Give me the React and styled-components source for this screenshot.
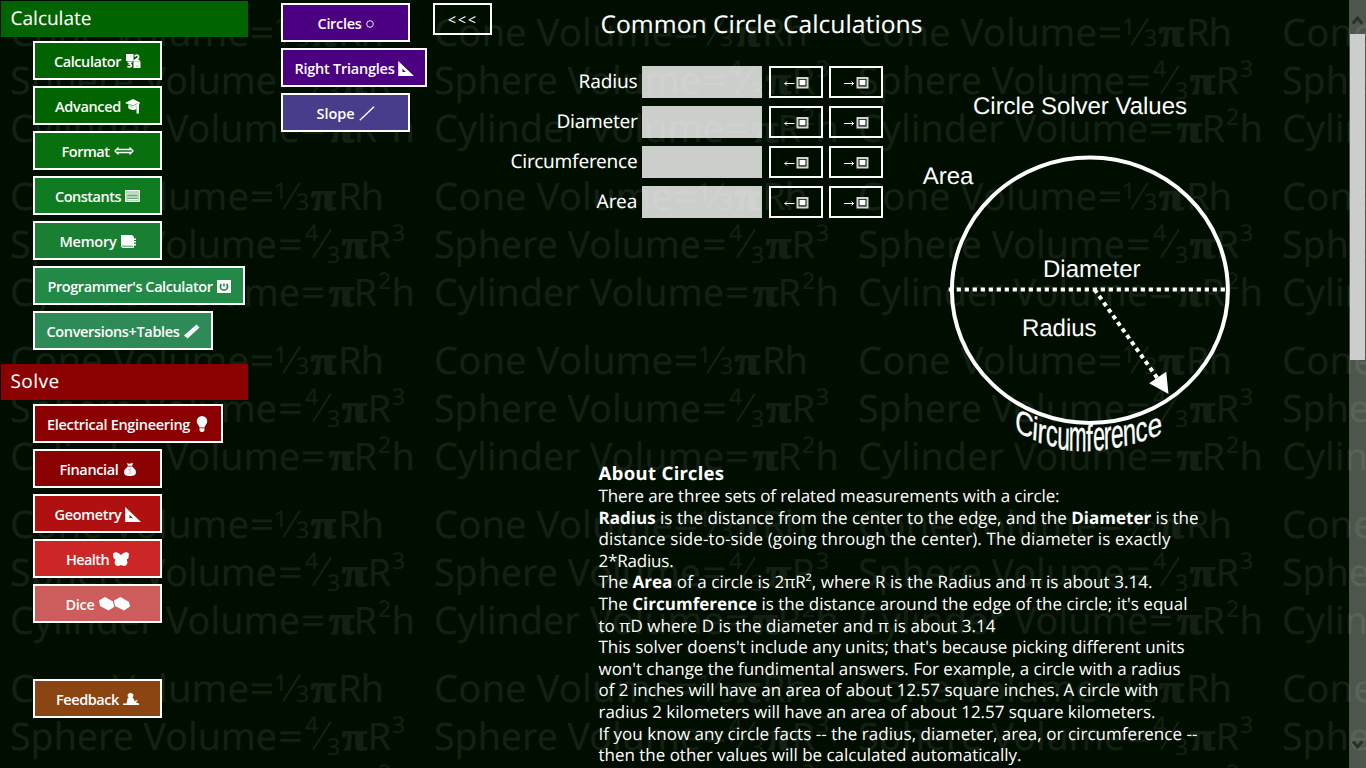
import React, { useLayoutEffect, useRef, useState } from "react";
import styled, { createGlobalStyle } from "styled-components";

const GlobalStyle = createGlobalStyle`
  body {
    margin: 0;
    background: #000e00;
    overflow: hidden;
  }
  * { box-sizing: border-box; }
`;

const sans = `"Open Sans", "Noto Sans", sans-serif`;
const display = `"Noto Sans", "Open Sans", sans-serif`;

const Page = styled.div`
  position: relative;
  display: flex;
  width: 1366px;
  height: 768px;
  overflow: hidden;
  background: #000e00;
  color: #fff;
  font-family: ${sans};
  text-rendering: geometricPrecision;
`;

/* ---------- text set to a given measure ---------- */

const Measured = styled.span`
  display: inline-block;
  white-space: pre;
`;

function Fit({ width, children }) {
  const ref = useRef(null);
  const [spacing, setSpacing] = useState(0);
  useLayoutEffect(() => {
    const el = ref.current;
    const natural = el.getBoundingClientRect().width;
    setSpacing((width - natural) / el.textContent.length);
  }, [width]);
  return (
    <Measured ref={ref} style={{ letterSpacing: `${spacing}px` }}>
      {children}
    </Measured>
  );
}

/* ---------- formula backdrop ---------- */

const Backdrop = styled.div`
  position: absolute;
  inset: 0;
  width: 1696px;
  display: grid;
  grid-template-columns: repeat(4, 424px);
  grid-auto-rows: 164px;
  pointer-events: none;
`;

const Tile = styled.svg`
  display: block;
  width: 424px;
  height: 164px;
  fill: #fff;
  opacity: 0.075;
  font-family: ${display};
  font-size: 38px;
`;

const Pi = styled.text`
  font-family: "Liberation Serif", serif;
  font-weight: 700;
  font-size: 40px;
  stroke: #fff;
  stroke-width: 1.2px;
`;

const Small = styled.text`
  font-size: 23px;
`;

function FormulaTile() {
  return (
    <Tile viewBox="0 0 424 164" aria-hidden="true">
      <text x="10" y="45.5" textLength="239" lengthAdjust="spacingAndGlyphs">Cone Volume</text>
      <text x="249.500" y="45.5" textLength="25" lengthAdjust="spacingAndGlyphs">=</text>
      <Small x="274" y="34.500">1</Small>
      <path d="M283 45.5L300 18.5" stroke="#fff" strokeWidth="2.2" />
      <Small x="296" y="45.500">3</Small>
      <Pi x="311" y="45.5" textLength="25" lengthAdjust="spacingAndGlyphs">π</Pi>
      <text x="338" y="45.5" textLength="46">Rh</text>

      <text x="10" y="93.5" textLength="267" lengthAdjust="spacingAndGlyphs">Sphere Volume</text>
      <text x="278" y="93.5" textLength="25" lengthAdjust="spacingAndGlyphs">=</text>
      <Small x="305" y="76.500">4</Small>
      <path d="M313 93.5L331 65.5" stroke="#fff" strokeWidth="2.2" />
      <Small x="327" y="98.500">3</Small>
      <Pi x="342" y="93.5" textLength="25" lengthAdjust="spacingAndGlyphs">π</Pi>
      <text x="367.500" y="93.5">R</text>
      <Small x="392" y="76.500">3</Small>

      <text x="10" y="141.5" textLength="290" lengthAdjust="spacingAndGlyphs">Cylinder Volume</text>
      <text x="300.500" y="141.5" textLength="25" lengthAdjust="spacingAndGlyphs">=</text>
      <Pi x="329" y="141.5" textLength="25" lengthAdjust="spacingAndGlyphs">π</Pi>
      <text x="353.500" y="141.5">R</text>
      <Small x="378" y="125">2</Small>
      <text x="391.500" y="141.5">h</text>
    </Tile>
  );
}

/* ---------- navigation ---------- */

const Sidebar = styled.nav`
  position: relative;
  width: 281px;
  padding: 1px 0 0 1px;
`;

const SectionTitle = styled.h2`
  display: flex;
  align-items: center;
  width: 247px;
  height: 36px;
  margin: 0 0 4px;
  padding: 0 0 3px 9.5px;
  background: ${(p) => p.$color};
  font-family: ${display};
  font-size: 19px;
  font-weight: 400;
`;

const ButtonList = styled.div`
  display: flex;
  flex-direction: column;
  align-items: flex-start;
  gap: 6px;
  padding-left: 32px;
  margin-bottom: ${(p) => p.$after || 0}px;
`;

const NavButton = styled.button`
  display: flex;
  align-items: center;
  justify-content: center;
  gap: ${(p) => p.$gap || 5}px;
  width: ${(p) => p.$width || 129}px;
  height: 39px;
  padding: 1px 0 0;
  border: 2px solid #fff;
  background: ${(p) => p.$color};
  color: #fff;
  font-family: ${sans};
  font-size: 14.5px;
  font-weight: 600;
  line-height: 35px;
`;

const Glyph = styled.svg`
  flex: none;
  display: block;
  fill: currentColor;
`;

const icons = {
  calculator: (
    <Glyph width="15" height="14" viewBox="0 0 15 14">
      <path d="M0 0H7.500V7H0zM7.500 7.200H14.500V14H7.500z" />
      <path d="M8.500 2.500Q10 .5 12 1.500Q13.500 3 11.500 4.500L9 6.200H13.500M1.500 8.300H5.200L3.400 10Q5.800 10.400 5.300 12Q4 13.500 1.300 12.600" fill="none" stroke="currentColor" strokeWidth="1.600" />
      <path d="M3.800 2h.8M9.800 12h2.600" stroke="#93bd97" strokeWidth=".8" />
    </Glyph>
  ),
  cap: (
    <Glyph width="15" height="15" viewBox="0 0 15 15">
      <path d="M0 4L8 0L15 3.500L14 6V14.500H11.500V7L8 8.500L3.500 6.500V5.200Z" />
      <path d="M3 6.500L7.500 8.500L11.500 7V10Q7.500 12 3.500 9.500Z" />
      <path d="M4 5.200L8 6.800L12.500 4.500" fill="none" stroke="#3f8c43" strokeWidth=".7" />
    </Glyph>
  ),
  format: (
    <Glyph width="20" height="8" viewBox="0 0 20 8">
      <path d="M3 2.500H17M3 5.500H17M4.500 .5L1 4L4.500 7.500M15.500 .5L19 4L15.500 7.500" fill="none" stroke="currentColor" strokeWidth="1.300" />
    </Glyph>
  ),
  table: (
    <Glyph width="15" height="12" viewBox="0 0 15 12">
      <path d="M.5 .5H14.500V11.500H.5Z" fill="#b9dabd" stroke="#fff" />
      <path d="M3 7H12.500M3 9.500H12.500" stroke="#fff" strokeWidth="1.200" />
      <path d="M2.500 5.800H12.500M2.500 8.200H12.500" stroke="#0f7c22" strokeWidth=".7" />
    </Glyph>
  ),
  memory: (
    <Glyph width="15" height="13" viewBox="0 0 15 13">
      <path d="M0 0H11L13 2V3.500H15V5H13V6H15V7.500H13V8.800H15V10.500H13V13H1.500L0 11.500Z" />
      <path d="M1 11.200H10.500L12.300 12.200" fill="none" stroke="#198033" strokeWidth=".8" />
    </Glyph>
  ),
  power: (
    <Glyph width="14" height="13" viewBox="0 0 14 13">
      <path d="M0 0H14V13H0Z" />
      <path d="M4.200 4Q2.500 7 4.300 9Q7 11.200 9.700 9Q11.500 6.500 9.700 3.800M7 3.500V6.500" fill="none" stroke="#238946" strokeWidth="1.600" />
    </Glyph>
  ),
  ruler: (
    <Glyph width="16" height="15" viewBox="0 0 16 15">
      <path d="M0 11.500L12.500 .5L15.500 3.500L3.500 14.500Z" />
      <path d="M3 10.500l.8.9M5.500 8.300l.8.9M8 6.100l.8.9M10.500 3.900l.8.9" stroke="#9dc9ae" strokeWidth=".7" />
    </Glyph>
  ),
  bulb: (
    <Glyph width="13" height="16" viewBox="0 0 13 16">
      <path d="M6 0A5.300 5.300 0 0 1 11.300 5.200C11.300 8 8.800 9 8.500 11.500H3.500C3.200 9 .7 8 .7 5.200A5.300 5.300 0 0 1 6 0ZM3.500 12.300H8.500V14.500L7 16H5L3.500 14.500Z" />
    </Glyph>
  ),
  money: (
    <Glyph width="12" height="13" viewBox="0 0 12 13">
      <path d="M3 0L5 .8L9 0L8.200 2.800H3.800ZM3.600 3.500H8.400Q12 6.500 12 9.500Q12 13 6 13Q0 13 0 9.500Q0 6.500 3.600 3.500Z" />
      <path d="M7.500 6.300Q4.700 5.800 4.800 7.200Q7.500 8.500 7.300 9.500Q6.500 10.900 4.500 10.200" fill="none" stroke="#c99" strokeWidth=".8" />
    </Glyph>
  ),
  triangle: (
    <Glyph width="16" height="15" viewBox="0 0 16 15">
      <path fillRule="evenodd" d="M.2 0L16 15H.2ZM4.500 7.800V11H7.800Z" />
    </Glyph>
  ),
  health: (
    <Glyph width="16" height="14" viewBox="0 0 16 14">
      <path d="M0 1.500L2.500 0L5.500 1L8 3L10.500 1L13.500 0L16 1.500L15.500 6L13.800 7.500L14.500 11L13 13.500L10.500 14L8 13L5.500 14L3 13.500L1.500 11L2.200 7.500L.5 6Z" />
    </Glyph>
  ),
  dice: (
    <Glyph width="31" height="14" viewBox="0 0 31 14">
      <path d="M0 3.500L6 0L14 4.500L15 9L15.500 9.800L9.500 13.500L1 9ZM15 3.500L21.500 0L30 5L31 9.500L25 13.500L16 9Z" />
    </Glyph>
  ),
  person: (
    <Glyph width="16" height="12" viewBox="0 0 16 12">
      <path d="M7.500 0A2.800 2.400 0 0 1 7.500 5A2.800 2.400 0 0 1 7.500 0ZM4.500 5.500Q7.500 3.500 10.500 5.300L11.500 8L15 6.800L13 9.500L16 10.500V12H0V10.500H3.500Z" />
    </Glyph>
  ),
  circle: (
    <Glyph width="8" height="10" viewBox="0 0 8 10">
      <circle cx="4" cy="6" r="3.300" fill="none" stroke="currentColor" strokeWidth=".9" />
    </Glyph>
  ),
  slope: (
    <Glyph width="16" height="15" viewBox="0 0 16 15">
      <path d="M.8 14.200L15 .8" stroke="currentColor" strokeWidth="1.400" />
    </Glyph>
  ),
};

const calculateItems = [
  { label: "Calculator", text: 67, icon: "calculator", color: "#006400" },
  { label: "Advanced", text: 66, icon: "cap", color: "#006400", gap: 4 },
  { label: "Format", text: 48, icon: "format", color: "#09700f", gap: 4 },
  { label: "Constants", text: 66, icon: "table", color: "#0f7c22", gap: 4 },
  { label: "Memory", text: 57, icon: "memory", color: "#198033", gap: 4 },
  { label: "Programmer's Calculator", text: 165, icon: "power", color: "#238946", width: 212, gap: 4 },
  { label: "Conversions+Tables", text: 133, icon: "ruler", color: "#2e8b57", width: 180, gap: 4 },
];

const solveItems = [
  { label: "Electrical Engineering", text: 143, icon: "bulb", color: "#8b0000", width: 190, gap: 6 },
  { label: "Financial", text: 59, icon: "money", color: "#8b0000" },
  { label: "Geometry", text: 67, icon: "triangle", color: "#b01010", gap: 3 },
  { label: "Health", text: 43, icon: "health", color: "#cd2626", gap: 4 },
  { label: "Dice", text: 29, icon: "dice", color: "#cd5c5c", gap: 4 },
];

const shapeItems = [
  { label: "Circles", text: 44, icon: "circle", color: "#4b0082", gap: 4 },
  { label: "Right Triangles", text: 100, icon: "triangle", color: "#4b0082", width: 146, gap: 3 },
  { label: "Slope", text: 38, icon: "slope", color: "#483d8b", gap: 4 },
];

function NavItems({ items }) {
  return items.map((item) => (
    <NavButton key={item.label} $color={item.color} $width={item.width} $gap={item.gap}>
      <Fit width={item.text}>{item.label}</Fit>
      {icons[item.icon]}
    </NavButton>
  ));
}

const Submenu = styled.nav`
  position: relative;
  display: flex;
  flex-direction: column;
  align-items: flex-start;
  gap: 6px;
  width: 152px;
  padding-top: 3px;
`;

/* ---------- solver ---------- */

const Main = styled.main`
  position: relative;
  width: 916px;
`;

const Header = styled.header`
  display: flex;
  align-items: flex-start;
  height: 66px;
  padding-top: 3px;
`;

const CollapseButton = styled.button`
  display: flex;
  align-items: center;
  justify-content: center;
  width: 59px;
  height: 32px;
  padding: 2px 0 0 1px;
  border: 2px solid #fff;
  background: transparent;
  color: #fff;
  font-family: ${sans};
  font-size: 14px;
  line-height: 26px;
`;

const Title = styled.h1`
  margin: 6px 0 0 108.5px;
  font-family: ${display};
  font-size: 24.5px;
  font-weight: 400;
  line-height: 32px;
`;

const Workspace = styled.div`
  display: flex;
  height: 394px;
`;

const Form = styled.div`
  display: flex;
  flex-direction: column;
  gap: 8px;
  width: 450px;
`;

const Field = styled.div`
  display: flex;
  align-items: center;
  height: 32px;
`;

const Label = styled.label`
  width: 204.5px;
  padding-bottom: 2px;
  margin-right: 4.5px;
  text-align: right;
  font-family: ${display};
  font-size: 19px;
  line-height: 28px;
`;

const Input = styled.input`
  width: 120px;
  height: 32px;
  margin-right: 7px;
  padding: 0;
  border: 0;
  background: rgba(255, 255, 255, 0.8);
`;

const ClipButton = styled.button`
  display: flex;
  justify-content: center;
  width: 54px;
  height: 32px;
  margin-right: 6px;
  padding: 9px 0 0;
  border: 2px solid #fff;
  background: transparent;
  color: #fff;
  &:last-child { margin-right: 0; }
`;

function ClipIcon({ out }) {
  return (
    <Glyph width="26" height="12" viewBox="0 0 26 12">
      <path
        d={out ? "M1 6.500H11M8.500 4.500L10.500 6.500L8.500 8.500" : "M1.500 6.500H11.500M4 4.500L2 6.500L4 8.500"}
        fill="none"
        stroke="currentColor"
        strokeWidth="1"
      />
      <path d="M14.500 1H24.500V10.500H14.500Z" fill="#000e00" stroke="#d2d6d2" strokeWidth="2" />
      <path d="M16.500 2.800H22.500V8.300H16.500Z" />
    </Glyph>
  );
}

const fields = [
  ["Radius", 59],
  ["Diameter", 81],
  ["Circumference", 127],
  ["Area", 41],
];

const Figure = styled.svg`
  display: block;
  flex: none;
  width: 330px;
  height: 394px;
  margin-left: 37px;
  fill: #fff;
  font-family: "Liberation Sans", Arial, sans-serif;
  font-size: 24px;
`;

const Arched = styled.text`
  font-size: 38px;
  stroke: #fff;
  stroke-width: 0.4px;
`;

/* letter, left, baseline, horizontal scale, slope, vertical scale */
const rimLetters = [
  ["C", 1014.5, 431, 0.66, 0.45, 0.86],
  ["i", 1031.8, 439, 0.66, 0.38, 0.86],
  ["r", 1037, 442, 0.68, 0.32, 0.92],
  ["c", 1045.500, 444.5, 0.62, 0.24, 0.98],
  ["u", 1057, 448.500, 0.6, 0.16, 1.06],
  ["m", 1068.800, 450.500, 0.56, 0.05, 1.14],
  ["f", 1086, 451, 0.62, 0, 0.98],
  ["e", 1093.300, 450.500, 0.56, -0.06, 1.1],
  ["r", 1104, 449.500, 0.6, -0.12, 1.08],
  ["e", 1111.300, 448.500, 0.6, -0.18, 1.06],
  ["n", 1123.300, 446.500, 0.62, -0.25, 1],
  ["c", 1136, 443, 0.63, -0.3, 0.92],
  ["e", 1148.300, 439, 0.68, -0.34, 0.86],
];

function CircleFigure() {
  return (
    <Figure viewBox="920 66 330 394">
      <text x="973" y="114" textLength="214">Circle Solver Values</text>
      <text x="922.700" y="184">Area</text>
      <text x="1043" y="277" textLength="97.500">Diameter</text>
      <text x="1022" y="336" textLength="74.500">Radius</text>
      <ellipse cx="1089.900" cy="290.300" rx="138" ry="132.700" fill="none" stroke="#fff" strokeWidth="4" />
      <path d="M948.700 289.500H1227" stroke="#fff" strokeWidth="4" strokeDasharray="4.200 3.800" />
      <path d="M1094.500 289.500L1158 379" stroke="#fff" strokeWidth="4" strokeDasharray="4.200 3.800" />
      <path d="M1168.500 394L1149.200 383.200L1166.200 371.700Z" />
      {rimLetters.map(([ch, x, y, sx, slope, sy], i) => (
        <Arched key={i} transform={`matrix(${sx} ${sx * slope} ${slope * -0.15} ${sy} ${x} ${y})`}>
          {ch}
        </Arched>
      ))}
    </Figure>
  );
}

/* ---------- article ---------- */

const About = styled.article`
  padding-left: 165.5px;
  font-size: 17px;
  line-height: 21.600px;
`;

const AboutTitle = styled.h3`
  height: 25px;
  margin: 0;
  padding-top: 1px;
  font-family: ${display};
  font-size: 18.500px;
  font-weight: 700;
  line-height: 25px;
`;

const Line = styled.div`
  height: 21.600px;
`;

const lines = [
  [461, "There are three sets of related measurements with a circle:"],
  [600, <><b>Radius</b> is the distance from the center to the edge, and the <b>Diameter</b> is the</>],
  [572, "distance side-to-side (going through the center). The diameter is exactly"],
  [75, "2*Radius."],
  [554, <>The <b>Area</b> of a circle is 2πR², where R is the Radius and π is about 3.14.</>],
  [589, <>The <b>Circumference</b> is the distance around the edge of the circle; it's equal</>],
  [397, "to πD where D is the diameter and π is about 3.14"],
  [586, "This solver doens't include any units; that's because picking different units"],
  [582, "won't change the fundimental answers. For example, a circle with a radius"],
  [560, "of 2 inches will have an area of about 12.57 square inches. A circle with"],
  [557, "radius 2 kilometers will have an area of about 12.57 square kilometers."],
  [599, "If you know any circle facts -- the radius, diameter, area, or circumference --"],
  [423, "then the other values will be calculated automatically."],
];

/* ---------- scrollbar ---------- */

const Scrollbar = styled.div`
  position: relative;
  display: flex;
  flex-direction: column;
  align-items: center;
  width: 17px;
  height: 768px;
  background: rgba(255, 255, 255, 0.3);
`;

const Chevron = styled.svg`
  flex: none;
  width: 11px;
  height: 10px;
  margin: ${(p) => (p.$down ? "auto 0 18px" : "15px 0 9px")};
  fill: none;
  stroke: #283028;
  stroke-width: 3;
`;

const Thumb = styled.div`
  width: 15px;
  height: 326px;
  background: #cdcdcd;
`;

export default function App() {
  return (
    <Page>
      <GlobalStyle />
      <Backdrop>
        {Array.from({ length: 20 }, (_, i) => <FormulaTile key={i} />)}
      </Backdrop>

      <Sidebar>
        <SectionTitle $color="#006400"><Fit width={81}>Calculate</Fit></SectionTitle>
        <ButtonList $after={14}><NavItems items={calculateItems} /></ButtonList>
        <SectionTitle $color="#8b0000"><Fit width={49}>Solve</Fit></SectionTitle>
        <ButtonList $after={56}><NavItems items={solveItems} /></ButtonList>
        <ButtonList>
          <NavButton $color="#8b4513" $gap={4}>
            <Fit width={63}>Feedback</Fit>
            {icons.person}
          </NavButton>
        </ButtonList>
      </Sidebar>

      <Submenu><NavItems items={shapeItems} /></Submenu>

      <Main>
        <Header>
          <CollapseButton><Fit width={30}>{"<<<"}</Fit></CollapseButton>
          <Title><Fit width={322}>Common Circle Calculations</Fit></Title>
        </Header>
        <Workspace>
          <Form>
            {fields.map(([name, width]) => (
              <Field key={name}>
                <Label><Fit width={width}>{name}</Fit></Label>
                <Input aria-label={name} />
                <ClipButton><ClipIcon /></ClipButton>
                <ClipButton><ClipIcon out /></ClipButton>
              </Field>
            ))}
          </Form>
          <CircleFigure />
        </Workspace>
        <About>
          <AboutTitle><Fit width={126}>About Circles</Fit></AboutTitle>
          {lines.map(([width, text], i) => (
            <Line key={i}><Fit width={width}>{text}</Fit></Line>
          ))}
        </About>
      </Main>

      <Scrollbar>
        <Chevron viewBox="0 0 11 10"><path d="M.8 8.500L5.500 3L10.200 8.500" /></Chevron>
        <Thumb />
        <Chevron $down viewBox="0 0 11 10"><path d="M.8 1.500L5.500 7L10.200 1.500" /></Chevron>
      </Scrollbar>
    </Page>
  );
}
